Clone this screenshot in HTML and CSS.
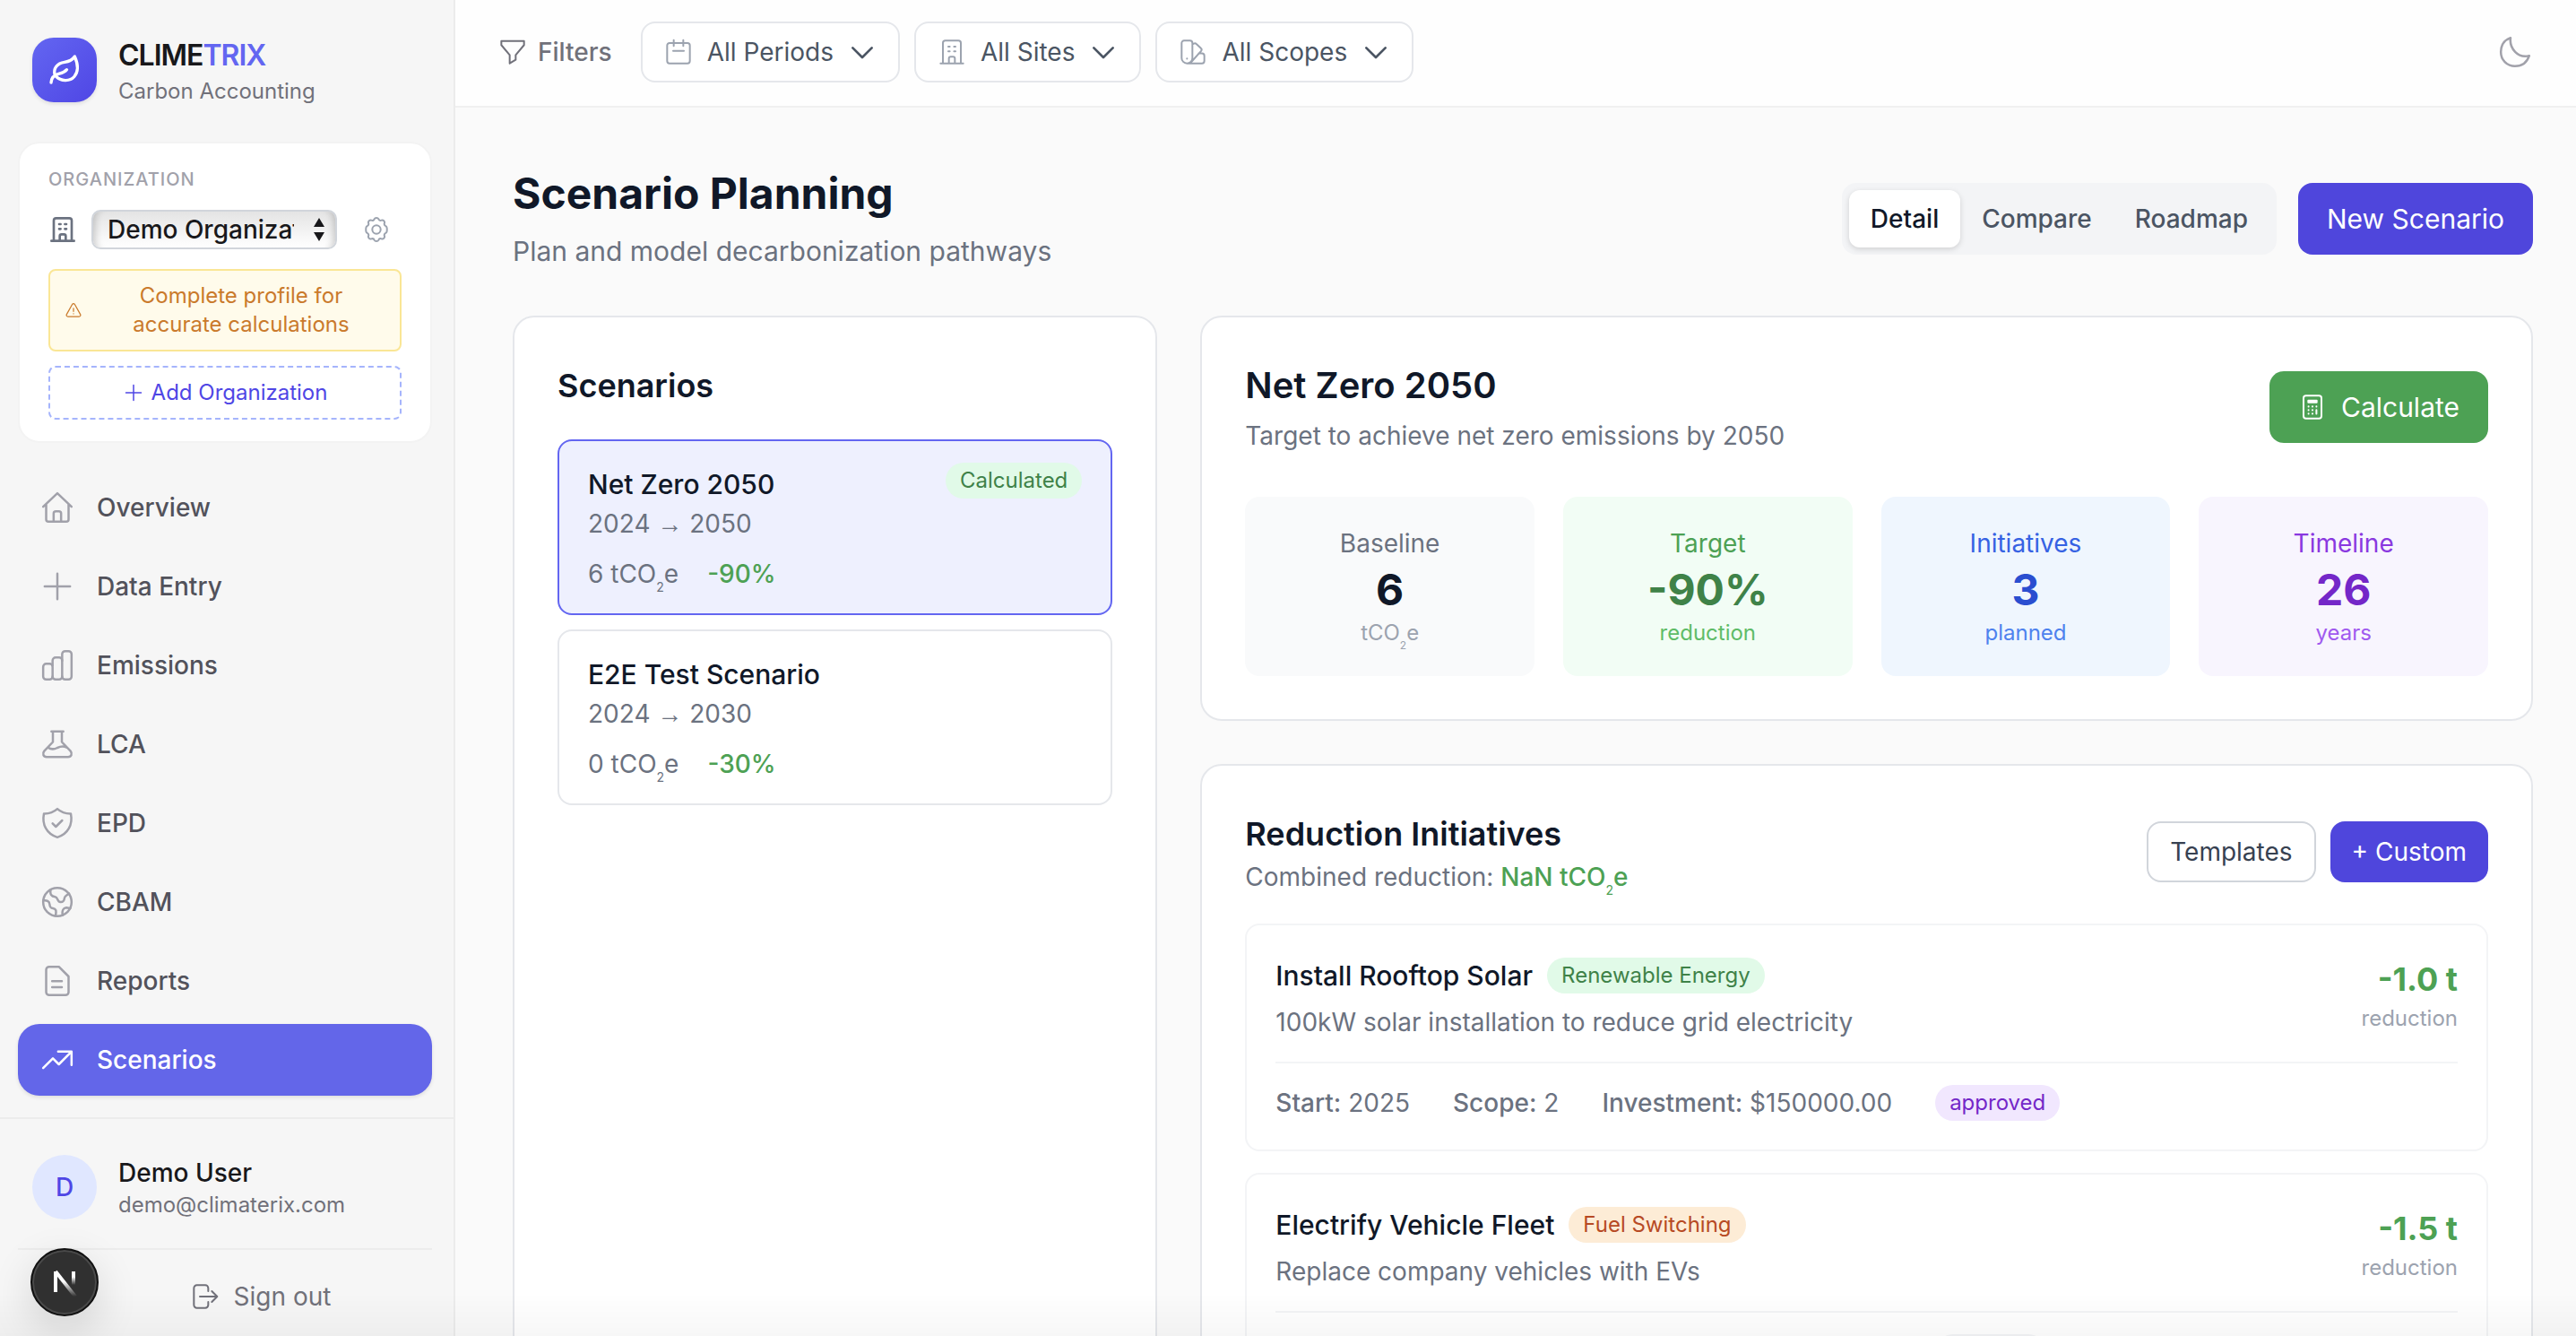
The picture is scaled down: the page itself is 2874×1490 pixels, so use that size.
FILE: index.html
```html
<!DOCTYPE html>
<html lang="en">
<head>
<meta charset="utf-8">
<title>Climetrix – Scenario Planning</title>
<link rel="stylesheet" href="styles.css">
</head>
<body>
<svg class="sprite" aria-hidden="true">
  <symbol id="i-leaf" viewBox="0 0 24 24"><path d="M5.500 15.500C4.300 11 7 7.500 12 6.800C15.500 6.300 17.500 5 18.800 3C21 8 21.500 13 18.500 16.500C15.500 20 9.500 19.500 6.500 16.500M3 20.500C3.200 16.500 5.500 15.200 8.500 14.500C11 13.900 12.500 13 13.500 11.800"/></symbol>
  <symbol id="i-building" viewBox="0 0 24 24"><path d="M2.500 21.500h19M4.500 21.500V4.500a2 2 0 0 1 2-2h11a2 2 0 0 1 2 2v17M9.500 21.500v-4a1.500 1.500 0 0 1 1.500-1.500h2a1.500 1.500 0 0 1 1.500 1.500v4M9 7.500h1.200M13.800 7.500H15M9 11.500h1.200M13.800 11.500H15"/></symbol>
  <symbol id="i-gear" viewBox="0 0 24 24"><circle cx="12" cy="12" r="3.500"/><path d="M10.300 3.100c.5-1.100 2.900-1.100 3.400 0 .5 1.300 1.300 1.600 2.600 1.100 1.300-.5 2.900 1.100 2.400 2.400-.5 1.300 0 2.100 1.300 2.700 1.100.5 1.100 4.900 0 5.400-1.300.6-1.800 1.400-1.300 2.700.5 1.300-1.100 2.900-2.400 2.400-1.300-.5-2.100-.2-2.600 1.100-.5 1.100-2.900 1.100-3.400 0-.5-1.300-1.300-1.600-2.600-1.100-1.300.5-2.900-1.100-2.400-2.400.5-1.300 0-2.100-1.300-2.700-1.100-.5-1.100-4.900 0-5.400 1.300-.6 1.800-1.400 1.300-2.700-.5-1.300 1.100-2.900 2.400-2.400 1.300.5 2.100.2 2.600-1.100z"/></symbol>
  <symbol id="i-warn" viewBox="0 0 24 24"><path d="M10.300 4.200 2.800 17.500A2 2 0 0 0 4.500 20.500h15a2 2 0 0 0 1.700-3L13.700 4.200a2 2 0 0 0-3.400 0zM12 9.500v4M12 16.500v.2"/></symbol>
  <symbol id="i-plus" viewBox="0 0 24 24"><path d="M12 3.500v17M3.500 12h17"/></symbol>
  <symbol id="i-home" viewBox="0 0 24 24"><path d="M2.500 11.500 12 2.500l9.500 9M4.500 9.800v10.200a1.500 1.500 0 0 0 1.500 1.500h12a1.500 1.500 0 0 0 1.500-1.500V9.800M9.500 21.500V16a1.500 1.500 0 0 1 1.500-1.500h2a1.500 1.500 0 0 1 1.500 1.500v5.500"/></symbol>
  <symbol id="i-bars" viewBox="0 0 24 24"><rect x="2.500" y="11" width="6.300" height="10.500" rx="2"/><path d="M8.800 12V8.800a2 2 0 0 1 2-2h2.400a2 2 0 0 1 2 2M8.800 19.500a2 2 0 0 0 2 2h2.400a2 2 0 0 0 2-2"/><rect x="15.200" y="2.500" width="6.300" height="19" rx="2"/></symbol>
  <symbol id="i-flask" viewBox="0 0 24 24"><path d="M8 3.500h8M9 3.500v7L3.200 16.600C1.800 18.300 2.600 20.500 4.800 20.500h14.400c2.200 0 3-2.200 1.600-3.900L15 10.500v-7M5.800 14.200c2.200 1.600 4.200 1.200 6.200.2 2.200-1 4.200-1.200 6.200-.2"/></symbol>
  <symbol id="i-shield" viewBox="0 0 24 24"><path d="M12 2.500c2.500 2.200 5.700 3.300 9 3.200C22.500 13 19 19.500 12 21.500 5 19.500 1.500 13 3 5.700c3.300.1 6.500-1 9-3.200zM8.800 12.200l2.200 2.200 4.200-4.200"/></symbol>
  <symbol id="i-globe" viewBox="0 0 24 24"><circle cx="12" cy="12" r="9.500"/><path d="M7.500 3.800c-.6 3 .5 4.500 3 4.700 2 .2 1.200 3.300 3.500 3.500 2.300.2 2.600-1.200 2.800-2.800.2-1.500 1.800-1.700 3-3M2.600 11c2.400-.3 4 .3 4.200 2.400.2 2 .6 2.600 2.200 2.800 2 .3 2.500 1.300 1.800 5M15.500 20.800c-.5-3 .3-4.800 2.500-5l2.600.4"/></symbol>
  <symbol id="i-doc" viewBox="0 0 24 24"><path d="M4.500 4.500a2 2 0 0 1 2-2H13L19.500 9v10.500a2 2 0 0 1-2 2h-11a2 2 0 0 1-2-2zM8.500 12.200h6.500M8.500 16.200h6.500"/></symbol>
  <symbol id="i-trend" viewBox="0 0 24 24"><path d="M2.500 17.500 9 11l4 4 8.300-8.300M12.500 6.500h9v9"/></symbol>
  <symbol id="i-out" viewBox="0 0 24 24"><path d="M14.500 7.500V5a2.500 2.500 0 0 0-2.500-2.500H5A2.500 2.500 0 0 0 2.500 5v14A2.500 2.500 0 0 0 5 21.500h7a2.500 2.500 0 0 0 2.500-2.500v-2.500M7.500 12h14.500M17.500 7.500 22 12l-4.500 4.500"/></symbol>
  <symbol id="i-funnel" viewBox="0 0 24 24"><path d="M2.500 2.800h19v3.400l-7 8.300v4L9.500 21.500v-7l-7-8.300z"/></symbol>
  <symbol id="i-calendar" viewBox="0 0 24 24"><path d="M4.500 4.500h15a2 2 0 0 1 2 2v13a2 2 0 0 1-2 2h-15a2 2 0 0 1-2-2v-13a2 2 0 0 1 2-2zM8 2v5M16 2v5M7.500 11h9"/></symbol>
  <symbol id="i-swatch" viewBox="0 0 24 24"><path d="M2.500 4.500a2 2 0 0 1 2-2h5a2 2 0 0 1 2 2v12.500a4.500 4.500 0 0 1-9 0zM11.500 5.600l1.200-.7c.8-.4 1.500-.3 2.100.3l3.800 3.600c.8.700.8 1.500.2 2.300L10 21M16.800 13.200h2.700a2 2 0 0 1 2 2v4.300a2 2 0 0 1-2 2H7M7 17.400v.2"/></symbol>
  <symbol id="i-chevron" viewBox="0 0 24 24"><path d="m4 8.500 8 8 8-8"/></symbol>
  <symbol id="i-moon" viewBox="0 0 24 24"><path d="M9 2.500C8 9.500 14 16.500 21.500 14.500 20 19 16.500 21.500 12 21.500 6.500 21.500 2.500 17.200 2.500 12 2.500 7.500 5 4 9 2.500z"/></symbol>
  <symbol id="i-calc" viewBox="0 0 24 24"><rect x="4.500" y="2.500" width="15" height="19" rx="2"/><rect x="8.500" y="6.500" width="7" height="1.500"/><path d="M8.700 11.500v.2M12 11.500v.2M15.300 11.500v.2M8.700 14.500v.2M12 14.500v.2M8.700 17.500v.2M12 17.500v.2M15.300 14.500v3.200"/></symbol>
</svg>

<div class="app">
  <aside class="sidebar">
    <div class="brand">
      <span class="brand-mark"><svg class="icon icon-lg"><use href="#i-leaf"/></svg></span>
      <div>
        <p class="brand-name">CLIME<span>TRIX</span></p>
        <p class="small muted">Carbon Accounting</p>
      </div>
    </div>

    <section class="org">
      <label class="org-label" for="org">ORGANIZATION</label>
      <div class="org-row">
        <svg class="icon org-icon"><use href="#i-building"/></svg>
        <div class="org-picker">
          <select id="org"><option>Demo Organization</option></select>
          <svg class="org-arrows" viewBox="0 0 12 26"><path d="M6 0l6 10H0zM6 26l6-10H0z"/></svg>
        </div>
        <button class="gear" aria-label="Organization settings"><svg class="icon"><use href="#i-gear"/></svg></button>
      </div>
      <button class="org-warning"><svg class="icon icon-xs"><use href="#i-warn"/></svg><span>Complete profile for accurate calculations</span></button>
      <button class="org-add"><svg class="icon icon-sm"><use href="#i-plus"/></svg>Add Organization</button>
    </section>

    <nav class="nav">
      <a href="#overview"><svg class="icon icon-lg"><use href="#i-home"/></svg>Overview</a>
      <a href="#data"><svg class="icon icon-lg"><use href="#i-plus"/></svg>Data Entry</a>
      <a href="#emissions"><svg class="icon icon-lg"><use href="#i-bars"/></svg>Emissions</a>
      <a href="#lca"><svg class="icon icon-lg"><use href="#i-flask"/></svg>LCA</a>
      <a href="#epd"><svg class="icon icon-lg"><use href="#i-shield"/></svg>EPD</a>
      <a href="#cbam"><svg class="icon icon-lg"><use href="#i-globe"/></svg>CBAM</a>
      <a href="#reports"><svg class="icon icon-lg"><use href="#i-doc"/></svg>Reports</a>
      <a href="#scenarios" class="active" aria-current="page"><svg class="icon icon-lg"><use href="#i-trend"/></svg>Scenarios</a>
    </nav>

    <footer class="account">
      <div class="user">
        <span class="avatar">D</span>
        <div>
          <p class="user-name">Demo User</p>
          <p class="small muted">demo@climaterix.com</p>
        </div>
      </div>
      <div class="account-actions">
        <button class="sign-out"><svg class="icon"><use href="#i-out"/></svg>Sign out</button>
      </div>
    </footer>
  </aside>

  <div class="page">
    <header class="topbar">
      <div class="filters">
        <span class="filters-label"><svg class="icon"><use href="#i-funnel"/></svg>Filters</span>
        <button class="filter"><svg class="icon"><use href="#i-calendar"/></svg><span>All Periods</span><svg class="icon icon-chevron"><use href="#i-chevron"/></svg></button>
        <button class="filter"><svg class="icon"><use href="#i-building"/></svg><span>All Sites</span><svg class="icon icon-chevron"><use href="#i-chevron"/></svg></button>
        <button class="filter"><svg class="icon"><use href="#i-swatch"/></svg><span>All Scopes</span><svg class="icon icon-chevron"><use href="#i-chevron"/></svg></button>
      </div>
      <button class="theme" aria-label="Dark mode"><svg class="icon icon-lg"><use href="#i-moon"/></svg></button>
    </header>

    <main class="main">
      <div class="page-head">
        <div>
          <h1>Scenario Planning</h1>
          <p class="lead">Plan and model decarbonization pathways</p>
        </div>
        <div class="head-actions">
          <div class="tabs">
            <button class="tab selected">Detail</button>
            <button class="tab">Compare</button>
            <button class="tab">Roadmap</button>
          </div>
          <button class="btn btn-primary">New Scenario</button>
        </div>
      </div>

      <div class="grid">
        <section class="card">
          <h2 class="heading">Scenarios</h2>
          <div class="scenario-list">
            <button class="scenario chosen">
              <span class="scenario-top"><span class="name">Net Zero 2050</span><span class="pill pill-green">Calculated</span></span>
              <span class="years">2024 <span class="arrow">→</span> 2050</span>
              <span class="figures"><span>6 tCO<sub>2</sub>e</span><span class="cut">-90%</span></span>
            </button>
            <button class="scenario">
              <span class="scenario-top"><span class="name">E2E Test Scenario</span></span>
              <span class="years">2024 <span class="arrow">→</span> 2030</span>
              <span class="figures"><span>0 tCO<sub>2</sub>e</span><span class="cut">-30%</span></span>
            </button>
          </div>
        </section>

        <div class="detail">
          <section class="card">
            <div class="card-head">
              <div>
                <h2 class="heading heading-lg">Net Zero 2050</h2>
                <p class="note">Target to achieve net zero emissions by 2050</p>
              </div>
              <button class="btn btn-green"><svg class="icon"><use href="#i-calc"/></svg>Calculate</button>
            </div>
            <div class="stats">
              <div class="stat stat-gray"><p class="stat-label">Baseline</p><p class="stat-value">6</p><p class="small">tCO<sub>2</sub>e</p></div>
              <div class="stat stat-green"><p class="stat-label">Target</p><p class="stat-value">-90%</p><p class="small">reduction</p></div>
              <div class="stat stat-blue"><p class="stat-label">Initiatives</p><p class="stat-value">3</p><p class="small">planned</p></div>
              <div class="stat stat-purple"><p class="stat-label">Timeline</p><p class="stat-value">26</p><p class="small">years</p></div>
            </div>
          </section>

          <section class="card">
            <div class="card-head list-head">
              <div>
                <h2 class="heading">Reduction Initiatives</h2>
                <p class="combined">Combined reduction: <strong>NaN tCO<sub>2</sub>e</strong></p>
              </div>
              <div class="list-actions">
                <button class="btn-sm btn-outline">Templates</button>
                <button class="btn-sm btn-primary">+ Custom</button>
              </div>
            </div>
            <div class="initiatives">
              <article class="initiative">
                <div class="initiative-top">
                  <div>
                    <div class="initiative-name"><h3 class="name">Install Rooftop Solar</h3><span class="pill pill-green">Renewable Energy</span></div>
                    <p class="note">100kW solar installation to reduce grid electricity</p>
                  </div>
                  <div class="saving"><p class="saving-value">-1.0 t</p><p class="small">reduction</p></div>
                </div>
                <div class="meta"><span><b>Start:</b> 2025</span><span><b>Scope:</b> 2</span><span><b>Investment:</b> $150000.00</span><span class="pill pill-purple">approved</span></div>
              </article>
              <article class="initiative">
                <div class="initiative-top">
                  <div>
                    <div class="initiative-name"><h3 class="name">Electrify Vehicle Fleet</h3><span class="pill pill-orange">Fuel Switching</span></div>
                    <p class="note">Replace company vehicles with EVs</p>
                  </div>
                  <div class="saving"><p class="saving-value">-1.5 t</p><p class="small">reduction</p></div>
                </div>
                <div class="meta"><span><b>Start:</b> 2026</span><span><b>Scope:</b> 1</span><span><b>Investment:</b> $250000.00</span><span class="pill pill-gray">planned</span></div>
              </article>
            </div>
          </section>
        </div>
      </div>
    </main>
  </div>
</div>

<div class="bottom-shade"></div>
<button class="dev-badge" aria-label="Open developer tools">
  <svg viewBox="0 0 40 40"><defs><linearGradient id="fade" x1="0" y1="0" x2="0" y2="1"><stop offset="0.400" stop-color="#fff"/><stop offset="1" stop-color="#fff" stop-opacity="0"/></linearGradient></defs><path d="M10 8l22 28" fill="none" stroke="url(#fade)" stroke-width="4"/><path d="M10 31V8" stroke="#fff" stroke-width="4"/><path d="M28 8h4v15h-4z" fill="url(#fade)"/></svg>
</button>
</body>
</html>
```
FILE: styles.css
```css
* { box-sizing: border-box; margin: 0; padding: 0; }

body {
  font-family: Inter, "Liberation Sans", sans-serif;
  font-size: 28px;
  line-height: 40px;
  color: #101828;
  background: #fafafa;
  overflow: hidden;
}

button, select { font: inherit; color: inherit; background: none; border: 0; cursor: pointer; }
a { color: inherit; text-decoration: none; }
sub { font-size: 50%; font-weight: 400; line-height: 0; vertical-align: -10px; }
.sprite { display: none; }

.icon { flex: none; width: 32px; height: 32px; fill: none; stroke: currentColor; stroke-width: 1.5; stroke-linecap: round; stroke-linejoin: round; }
.icon-xs { width: 20px; height: 20px; }
.icon-sm { width: 24px; height: 24px; }
.icon-lg { width: 40px; height: 40px; }

.small { font-size: 24px; line-height: 32px; }
.muted { color: #71717a; }

.app { display: flex; height: 100vh; }

/* Sidebar */
.sidebar { flex: none; display: flex; flex-direction: column; width: 508px; background: #f6f6f6; border-right: 2px solid #ececec; }
.brand { display: flex; align-items: center; gap: 24px; padding: 38px 36px; }
.brand-mark { display: grid; place-items: center; width: 72px; height: 72px; border-radius: 24px; color: #fff; background: linear-gradient(135deg, #6366f1, #4f46e5); box-shadow: 0 2px 4px #0000001a; }
.brand-mark .icon { stroke-width: 2; }
.brand-name { font-size: 32px; line-height: 48px; font-weight: 600; letter-spacing: -1px; color: #18181b; }
.brand-name span { color: #6366f1; }

.org { display: flex; flex-direction: column; margin: 2px 24px 32px 20px; padding: 24px 32px; background: #fff; border: 2px solid #f3f3f3; border-radius: 24px; }
.org-label { font-size: 20px; line-height: 32px; font-weight: 500; letter-spacing: 1px; color: #a1a1aa; }
.org-row { display: flex; align-items: center; gap: 16px; height: 56px; margin: 12px 0 16px; }
.org-icon { color: #6b7280; stroke-width: 2; }
.org-picker { display: grid; align-items: center; flex: 1; }
.org-picker > * { grid-area: 1 / 1; }
.org-picker select { width: 100%; height: 44px; padding: 0 46px 0 16px; line-height: 40px; font-weight: 500; color: #18181b; appearance: none; border: 2px solid #d1d5db; border-radius: 10px; background: linear-gradient(#e4e4e4, #fff); box-shadow: inset 10px 0 8px -8px #0003, inset -10px 0 8px -8px #0003; }
.org-arrows { justify-self: end; width: 12px; height: 26px; margin-right: 14px; fill: #18181b; pointer-events: none; }
.gear { display: grid; place-items: center; width: 56px; height: 56px; color: #9ca3af; }
.org-warning { display: flex; align-items: center; gap: 16px; padding: 12px 16px; font-size: 24px; line-height: 32px; color: #ca7a2c; background: #fffbeb; border: 2px solid #fae695; border-radius: 8px; }
.org-warning span { flex: 1; }
.org-add { display: flex; align-items: center; justify-content: center; gap: 8px; margin-top: 16px; padding: 12px; font-size: 24px; line-height: 32px; color: #4f46e5; border: 2px dashed #a5b4fc; border-radius: 8px; }

.nav { display: flex; flex-direction: column; gap: 8px; padding: 0 24px 0 20px; }
.nav a { display: flex; align-items: center; gap: 24px; padding: 20px 24px; font-weight: 500; color: #52525b; border-radius: 24px; }
.nav .icon { color: #a1a1aa; }
.nav .active { color: #fff; background: #6366e9; box-shadow: 0 2px 4px #0000001a; }
.nav .active .icon { color: #fff; }

.account { margin-top: 24px; padding: 24px 24px 0 20px; border-top: 2px solid #ececec; }
.user { display: flex; align-items: center; gap: 24px; padding: 16px 16px 32px; }
.avatar { display: grid; place-items: center; width: 72px; height: 72px; border-radius: 50%; font-weight: 500; color: #4f46e5; background: #e0e7ff; }
.user-name { font-weight: 500; color: #18181b; }
.account-actions { padding: 16px 0 0 80px; border-top: 2px solid #ececec; }
.sign-out { display: flex; align-items: center; justify-content: center; gap: 16px; width: 100%; padding: 16px; color: #71717a; }

/* Top bar */
.page { flex: 1; min-width: 0; overflow: hidden; }
.topbar { display: flex; align-items: center; justify-content: space-between; padding: 24px 48px 26px; background: #fefefe; border-bottom: 2px solid #f0f0f0; }
.filters { display: flex; align-items: center; gap: 16px; }
.filters-label { display: flex; align-items: center; gap: 12px; margin-right: 16px; font-weight: 500; color: #71717a; }
.filter { display: flex; align-items: center; gap: 16px; padding: 12px 24px; color: #4b5563; background: #fff; border: 2px solid #e5e7eb; border-radius: 16px; }
.filter .icon { color: #9ca3af; }
.filter .icon-chevron { color: #4b5563; stroke-width: 2; }
.theme { display: grid; place-items: center; color: #a1a1aa; }

/* Main */
.main { padding: 64px 48px 64px 64px; }
.page-head { display: flex; align-items: center; justify-content: space-between; margin-bottom: 48px; }
h1 { font-size: 48px; line-height: 64px; font-weight: 700; }
.lead { margin-top: 8px; font-size: 30px; line-height: 48px; color: #6b7280; }
.head-actions { display: flex; gap: 24px; }
.tabs { display: flex; padding: 8px; background: #f3f4f6; border-radius: 16px; }
.tab { padding: 12px 24px; font-weight: 500; color: #4b5563; border-radius: 12px; }
.tab.selected { color: #101828; background: #fff; box-shadow: 0 2px 6px #00000026; }
.btn { display: flex; align-items: center; gap: 16px; padding: 16px 32px; font-size: 30px; line-height: 48px; border-radius: 16px; }
.btn-primary { color: #fff; background: #4f46dc; }
.btn-green { color: #fff; background: #4da154; }

.grid { display: grid; grid-template-columns: repeat(3, minmax(0, 1fr)); gap: 48px; }
.detail { grid-column: span 2; display: flex; flex-direction: column; gap: 48px; }
.card { padding: 48px; background: #fff; border: 2px solid #e5e7eb; border-radius: 24px; }
.heading { font-size: 36px; line-height: 56px; font-weight: 600; }
.heading-lg { font-size: 40px; }
.name { font-size: 30px; line-height: 48px; font-weight: 500; color: #101828; }
.note { margin-top: 8px; color: #6b7280; }

.scenario-list { display: flex; flex-direction: column; gap: 16px; margin-top: 32px; }
.scenario { display: flex; flex-direction: column; padding: 24px 32px; text-align: left; color: #6b7280; border: 2px solid #e5e7eb; border-radius: 16px; }
.scenario.chosen { background: #eef0fe; border-color: #6366f1; }
.scenario-top { display: flex; align-items: flex-start; justify-content: space-between; }
.arrow { font-family: "Liberation Sans", sans-serif; line-height: 1; }
.figures { display: flex; gap: 32px; margin-top: 16px; }
.cut { font-weight: 500; color: #4da154; }

.pill { padding: 4px 16px; font-size: 24px; line-height: 32px; border-radius: 20px; }
.pill-green { color: #3f8248; background: #e1fae8; }
.pill-purple { color: #7427c8; background: #f1e7fe; }
.pill-orange { color: #b74a24; background: #fdecd6; }
.pill-gray { color: #374151; background: #f3f4f6; }

.card-head { display: flex; align-items: center; justify-content: space-between; margin-bottom: 48px; }
.stats { display: grid; grid-template-columns: repeat(4, minmax(0, 1fr)); gap: 32px; }
.stat { padding: 32px; text-align: center; border-radius: 16px; }
.stat-value { font-size: 48px; line-height: 64px; font-weight: 700; }
.stat-gray { background: #f9fafb; color: #9ca3af; }
.stat-gray .stat-label { color: #6b7280; }
.stat-gray .stat-value { color: #101828; }
.stat-green { background: #f2fdf5; color: #5fbc68; }
.stat-green .stat-label { color: #4da154; }
.stat-green .stat-value { color: #3f8248; }
.stat-blue { background: #eff6fe; color: #4e82ee; }
.stat-blue .stat-label { color: #3662e3; }
.stat-blue .stat-value { color: #2a4ed0; }
.stat-purple { background: #f8f5fe; color: #a05aef; }
.stat-purple .stat-label { color: #8a38e0; }
.stat-purple .stat-value { color: #7427c8; }

.list-head { margin-bottom: 32px; }
.combined { color: #6b7280; }
.combined strong { font-weight: 500; color: #4da154; }
.list-actions { display: flex; gap: 16px; }
.btn-sm { padding: 12px 24px; border-radius: 16px; }
.btn-outline { color: #374151; border: 2px solid #d1d5db; }
.initiatives { display: flex; flex-direction: column; gap: 24px; }
.initiative { padding: 32px; border: 2px solid #f3f4f6; border-radius: 16px; }
.initiative-top { display: flex; align-items: flex-start; justify-content: space-between; }
.initiative-name { display: flex; align-items: center; gap: 16px; }
.saving { text-align: right; color: #9ca3af; }
.saving-value { font-size: 36px; line-height: 56px; font-weight: 700; color: #4da154; }
.meta { display: flex; align-items: center; gap: 48px; margin-top: 24px; padding-top: 24px; color: #6b7280; border-top: 2px solid #f3f4f6; }
.meta b { font-weight: 500; }

/* Shade along the window's bottom edge */
.bottom-shade { position: fixed; left: 0; right: 0; bottom: 0; height: 48px; background: linear-gradient(#0000, #00000008); pointer-events: none; }

/* Floating developer badge */
.dev-badge { position: fixed; left: 34px; bottom: 22px; display: grid; place-items: center; width: 76px; height: 76px; border-radius: 50%; background: #303030; border: 2px solid #111; box-shadow: inset 0 0 0 2px #4a4a4a, 0 16px 48px #00000024; }
.dev-badge svg { width: 40px; height: 40px; }
```
